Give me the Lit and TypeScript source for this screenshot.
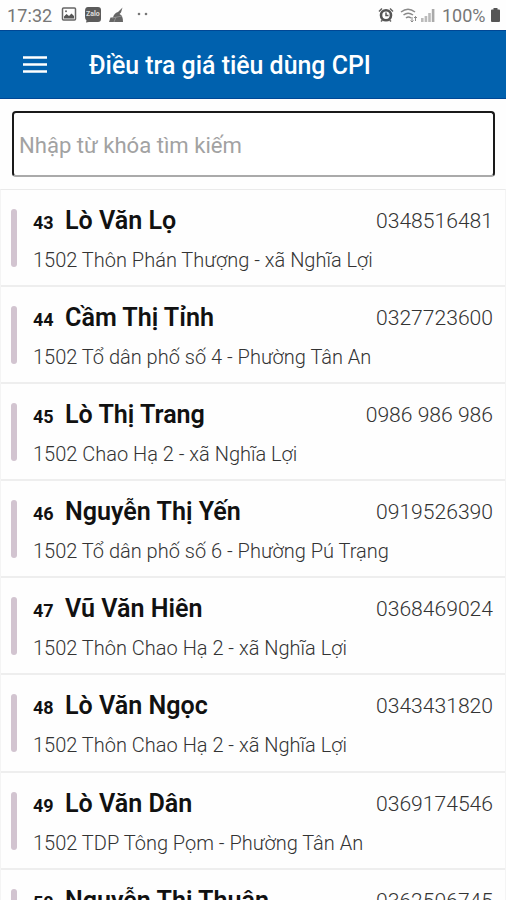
import { LitElement, html, css, svg } from "lit";
import { customElement } from "lit/decorators.js";

interface Respondent {
  no: number;
  name: string;
  phone: string;
  address: string;
}

const respondents: Respondent[] = [
  { no: 43, name: "Lò Văn Lọ", phone: "0348516481", address: "1502 Thôn Phán Thượng - xã Nghĩa Lợi" },
  { no: 44, name: "Cầm Thị Tỉnh", phone: "0327723600", address: "1502 Tổ dân phố số 4 - Phường Tân An" },
  { no: 45, name: "Lò Thị Trang", phone: "0986 986 986", address: "1502 Chao Hạ 2 - xã Nghĩa Lợi" },
  { no: 46, name: "Nguyễn Thị Yến", phone: "0919526390", address: "1502 Tổ dân phố số 6 - Phường Pú Trạng" },
  { no: 47, name: "Vũ Văn Hiên", phone: "0368469024", address: "1502 Thôn Chao Hạ 2 - xã Nghĩa Lợi" },
  { no: 48, name: "Lò Văn Ngọc", phone: "0343431820", address: "1502 Thôn Chao Hạ 2 - xã Nghĩa Lợi" },
  { no: 49, name: "Lò Văn Dân", phone: "0369174546", address: "1502 TDP Tông Pọm - Phường Tân An" },
  { no: 50, name: "Nguyễn Thị Thuận", phone: "0362506745", address: "" },
];

@customElement("status-bar")
class StatusBar extends LitElement {
  static styles = css`
    :host {
      display: flex;
      flex: none;
      align-items: center;
      height: 30px;
      box-sizing: border-box;
      padding: 0 5px 0 7px;
      color: #777;
      font-size: 18px;
    }
    svg { display: block; flex: none; }
    .time { width: 54px; letter-spacing: 0.1px; }
    .notes { display: flex; gap: 7px; align-items: center; flex: 1; }
    .system { display: flex; align-items: center; }
    .wifi { margin-left: 6px; }
    .signal { margin-left: 2px; }
    .percent { margin: 0 4px 0 7px; width: 44px; }
  `;

  render() {
    return html`
      <span class="time">17:32</span>
      <div class="notes">
        <svg width="16" height="16" viewBox="0 0 16 16">
          <rect x="1.5" y="1" width="13" height="12" rx="1" fill="none" stroke="#666" stroke-width="1.5" />
          <path d="M3 11.5V9.500L5.5 7 8 9 10.5 6.500 13 9V11.500Z" fill="#555" />
          <circle cx="5" cy="4.2" r="1" fill="#666" />
        </svg>
        <svg width="18" height="16" viewBox="0 0 18 16">
          <path d="M4 0H14Q17 0 17 3V12Q17 15 14 15H5L2 15.500 2.500 13.500Q1 12 1 10V4Q1 0 4 0Z" fill="#5b5b5b" />
          <text x="2" y="9" font-size="7" font-weight="700" fill="#ddd">Zalo</text>
        </svg>
        <svg width="16" height="16" viewBox="0 0 16 16">
          <path d="M0 15L1.500 10.500H4Q5 6 9 5L13.500 0.500 12 5.500 10.500 7Q14 8 14 15Z" fill="#666" />
          <path d="M3 11L13 9M5 15L7 10" stroke="#999" stroke-width=".8" />
        </svg>
        <svg width="22" height="16" viewBox="0 0 22 16">
          <circle cx="7" cy="7" r="1.300" fill="#777" />
          <circle cx="14" cy="7" r="1.300" fill="#777" />
        </svg>
      </div>
      <div class="system">
        <svg width="16" height="16" viewBox="0 0 16 16">
          <circle cx="8" cy="8.300" r="5" fill="#fff" stroke="#555" stroke-width="2.600" />
          <path d="M8 5.500V8.500H10.500" fill="none" stroke="#555" stroke-width="1.500" />
          <path d="M1 4.500L4 1.500M12 1.500L15 4.500M3 14.500L4.500 13M13 14.500L11.500 13" stroke="#666" stroke-width="1.600" />
        </svg>
        <svg class="wifi" width="18" height="16" viewBox="0 0 18 16">
          <path d="M1 5Q8-0.500 15 5M3.500 8Q8 4.300 13 8M6 11Q8.500 9 11 11" fill="none" stroke="#8a8a8a" stroke-width="1.500" />
          <path d="M12 10V15M10.500 13.500L12 15 13.500 13.500M15.500 14V9.500M14 11L15.500 9.500 17 11" fill="none" stroke="#8a8a8a" />
        </svg>
        <svg class="signal" width="15" height="16" viewBox="0 0 15 16">
          ${[4, 6, 9, 13].map(
            (h, i) => svg`<rect x=${1 + i * 3.6} y=${15 - h} width="2.6" height=${h} fill=${i < 3 ? "#bbb" : "#aaa"} />`,
          )}
        </svg>
        <span class="percent">100%</span>
        <svg width="11" height="16" viewBox="0 0 11 16">
          <path d="M3.500 1H7.500V2.500H9Q10 2.500 10 3.500V14Q10 15 9 15H2Q1 15 1 14V3.500Q1 2.500 2 2.500H3.500Z" fill="#555" />
        </svg>
      </div>
    `;
  }
}

@customElement("app-root")
class AppRoot extends LitElement {
  static styles = css`
    :host {
      display: flex;
      flex-direction: column;
      height: 900px;
      overflow: hidden;
      background: #fefefe;
      font-family: Roboto, "Noto Sans", sans-serif;
      color: #111;
    }
    header {
      display: flex;
      align-items: center;
      flex: none;
      height: 69px;
      box-sizing: border-box;
      padding: 2px 23px 0;
      background: #0061ae;
      border-top: 1px solid #004795;
      border-bottom: 1px solid #004795;
    }
    .menu { display: block; width: 24px; height: 18px; margin: 0 42px 1px 0; }
    h1 { margin: 0; color: #fff; font-size: 24.9px; line-height: 32px; font-weight: 500; white-space: nowrap; }
    .search {
      flex: none;
      height: 66px;
      box-sizing: border-box;
      margin: 12px 11px 12px 12px;
      padding: 2px 5px 0;
      border: 2px solid #1a1a1a;
      border-bottom: 2px solid #aaa;
      border-radius: 4px;
      background: #fff;
      color: #a2a2a2;
      font: inherit;
      font-size: 22.1px;
      outline: none;
    }
    .search::placeholder { color: #a2a2a2; opacity: 1; }
    .list { flex: none; border-top: 1px solid #eaeaea; border-left: 1px solid #f4f4f4; border-right: 1px solid #f4f4f4; }
    .row {
      display: flex;
      height: 97.1px;
      box-sizing: border-box;
      padding: 19px 12px 0 10px;
      border-bottom: 2px solid #eee;
    }
    .bar { flex: none; width: 6px; height: 58px; margin-right: 16px; border-radius: 3px; background: #d2c4d0; }
    .body { flex: 1; min-width: 0; }
    .top { display: flex; align-items: baseline; height: 38px; line-height: 23px; white-space: nowrap; }
    .no { width: 32px; font-size: 18px; font-weight: 700; }
    .name { flex: 1; font-size: 25.1px; font-weight: 600; }
    .phone { padding-bottom: 1px; align-self: flex-start; line-height: 24px; font-size: 21.1px; color: #333; font-weight: 350; }
    .address { font-size: 20px; line-height: 26px; color: #333; white-space: nowrap; font-weight: 350; }
  `;

  render() {
    return html`
      <status-bar></status-bar>
      <header>
        <svg class="menu" viewBox="0 0 24 18">
          <path d="M0 1.500H24M0 8.500H24M0 15.500H24" stroke="#fff" stroke-width="2.600" />
        </svg>
        <h1>Điều tra giá tiêu dùng CPI</h1>
      </header>
      <input class="search" placeholder="Nhập từ khóa tìm kiếm" />
      <div class="list">
        ${respondents.map(
          (r) => html`
            <div class="row">
              <div class="bar"></div>
              <div class="body">
                <div class="top">
                  <span class="no">${r.no}</span>
                  <span class="name">${r.name}</span>
                  <span class="phone">${r.phone}</span>
                </div>
                <div class="address">${r.address}</div>
              </div>
            </div>
          `,
        )}
      </div>
    `;
  }
}
